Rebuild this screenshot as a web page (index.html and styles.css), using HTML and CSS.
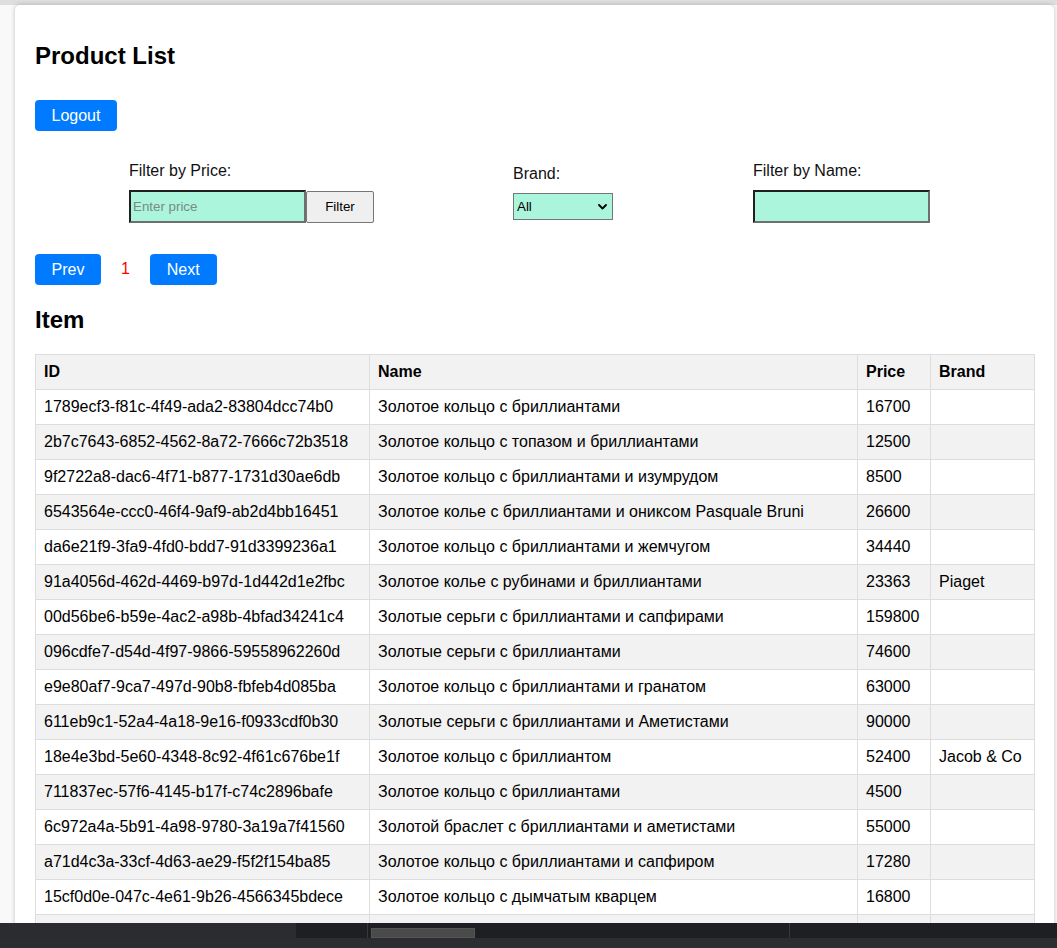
FILE: index.html
```html
<!DOCTYPE html>
<html lang="ru">
<head>
<meta charset="utf-8">
<title>Product List</title>
<link rel="stylesheet" href="styles.css">
</head>
<body>
<div class="topstrip"></div>
<div class="container">
  <h2 class="title">Product List</h2>
  <div class="logout-row"><button class="btn">Logout</button></div>

  <div class="filters">
    <div class="group group-price">
      <label class="lbl">Filter by Price:</label>
      <div class="inline">
        <input class="field" type="text" placeholder="Enter price">
        <button class="plain-btn">Filter</button>
      </div>
    </div>
    <div class="group group-brand">
      <label class="lbl">Brand:</label>
      <div class="select-wrap">
        <select class="select"><option>All</option></select>
        <svg class="chev" width="9" height="6" viewBox="0 0 9 6" aria-hidden="true">
          <path d="M1 1 L4.5 4.5 L8 1" fill="none" stroke="#000" stroke-width="1.8" stroke-linecap="round" stroke-linejoin="round"/>
        </svg>
      </div>
    </div>
    <div class="group group-name">
      <label class="lbl">Filter by Name:</label>
      <input class="field" type="text">
    </div>
  </div>

  <div class="pager">
    <button class="btn btn-page">Prev</button>
    <span class="page-num">1</span>
    <button class="btn btn-page">Next</button>
  </div>

  <h2 class="section-title">Item</h2>

  <table class="items">
    <colgroup>
      <col class="c-id"><col class="c-name"><col class="c-price"><col class="c-brand">
    </colgroup>
    <thead>
      <tr><th>ID</th><th>Name</th><th>Price</th><th>Brand</th></tr>
    </thead>
    <tbody>
      <tr><td>1789ecf3-f81c-4f49-ada2-83804dcc74b0</td><td>Золотое кольцо с бриллиантами</td><td>16700</td><td></td></tr>
      <tr><td>2b7c7643-6852-4562-8a72-7666c72b3518</td><td>Золотое кольцо с топазом и бриллиантами</td><td>12500</td><td></td></tr>
      <tr><td>9f2722a8-dac6-4f71-b877-1731d30ae6db</td><td>Золотое кольцо с бриллиантами и изумрудом</td><td>8500</td><td></td></tr>
      <tr><td>6543564e-ccc0-46f4-9af9-ab2d4bb16451</td><td>Золотое колье с бриллиантами и ониксом Pasquale Bruni</td><td>26600</td><td></td></tr>
      <tr><td>da6e21f9-3fa9-4fd0-bdd7-91d3399236a1</td><td>Золотое кольцо с бриллиантами и жемчугом</td><td>34440</td><td></td></tr>
      <tr><td>91a4056d-462d-4469-b97d-1d442d1e2fbc</td><td>Золотое колье с рубинами и бриллиантами</td><td>23363</td><td>Piaget</td></tr>
      <tr><td>00d56be6-b59e-4ac2-a98b-4bfad34241c4</td><td>Золотые серьги с бриллиантами и сапфирами</td><td>159800</td><td></td></tr>
      <tr><td>096cdfe7-d54d-4f97-9866-59558962260d</td><td>Золотые серьги с бриллиантами</td><td>74600</td><td></td></tr>
      <tr><td>e9e80af7-9ca7-497d-90b8-fbfeb4d085ba</td><td>Золотое кольцо с бриллиантами и гранатом</td><td>63000</td><td></td></tr>
      <tr><td>611eb9c1-52a4-4a18-9e16-f0933cdf0b30</td><td>Золотые серьги с бриллиантами и Аметистами</td><td>90000</td><td></td></tr>
      <tr><td>18e4e3bd-5e60-4348-8c92-4f61c676be1f</td><td>Золотое кольцо с бриллиантом</td><td>52400</td><td>Jacob &amp; Co</td></tr>
      <tr><td>711837ec-57f6-4145-b17f-c74c2896bafe</td><td>Золотое кольцо с бриллиантами</td><td>4500</td><td></td></tr>
      <tr><td>6c972a4a-5b91-4a98-9780-3a19a7f41560</td><td>Золотой браслет с бриллиантами и аметистами</td><td>55000</td><td></td></tr>
      <tr><td>a71d4c3a-33cf-4d63-ae29-f5f2f154ba85</td><td>Золотое кольцо с бриллиантами и сапфиром</td><td>17280</td><td></td></tr>
      <tr><td>15cf0d0e-047c-4e61-9b26-4566345bdece</td><td>Золотое кольцо с дымчатым кварцем</td><td>16800</td><td></td></tr>
      <tr><td>&nbsp;</td><td>&nbsp;</td><td>&nbsp;</td><td>&nbsp;</td></tr>
    </tbody>
  </table>
</div>

<div class="hscroll">
  <div class="hs-track">
    <div class="hs-left"></div>
    <div class="hs-gap1"></div>
    <div class="hs-line"></div>
    <div class="hs-thumb"></div>
    <div class="hs-gap2"></div>
    <div class="hs-line"></div>
  </div>
  <div class="hs-bottom"></div>
</div>
</body>
</html>
```

FILE: styles.css
```css
html, body {
  margin: 0;
  padding: 0;
  overflow: hidden;
}

body {
  background: #f9f9f9;
  font-family: "Liberation Sans", Arial, sans-serif;
  color: #000;
  font-size: 16px;
}

.topstrip {
  height: 5px;
  background: #dedede;
}

.container {
  margin: 0 3px 0 15px;
  background: #fff;
  border-radius: 5px;
  box-shadow: 0 0 5px rgba(0, 0, 0, 0.22);
  padding: 37px 20px 40px 20px;
}

.title {
  font-size: 24px;
  font-weight: bold;
  line-height: 27.6px;
  margin: 0 0 30px 0;
}

.btn {
  background: #007bff;
  color: #fff;
  border: 0;
  border-radius: 4px;
  font-family: "Liberation Sans", Arial, sans-serif;
  font-size: 16px;
  line-height: 19px;
  padding: 6px 16.5px;
  cursor: pointer;
}

.btn-page:last-child {
  padding: 6px 17px;
}

.logout-row {
  display: flex;
}

.filters {
  display: flex;
  align-items: center;
  gap: 139px;
  margin: 30px 0 0 94px;
}

.group {
  display: flex;
  flex-direction: column;
}

.group-name {
  margin-left: 1px;
}

.lbl {
  display: block;
  line-height: 18px;
  margin: 1px 0 10px 0;
  color: #111;
}

.inline {
  display: flex;
  align-items: flex-end;
}

.field {
  box-sizing: border-box;
  width: 177px;
  height: 33px;
  margin: 0;
  padding: 0 2px;
  background: #abf5dc;
  border-style: solid;
  border-width: 2px;
  border-color: #1f1f1f #6f6f6f #6f6f6f #1f1f1f;
  font-family: "Liberation Sans", Arial, sans-serif;
  font-size: 13.33px;
  outline: none;
}

.field::placeholder {
  color: #7a8a84;
}

.plain-btn {
  box-sizing: border-box;
  width: 68px;
  height: 32px;
  margin: 0;
  background: #efefef;
  border: 1px solid #767676;
  border-radius: 2px;
  font-family: "Liberation Sans", Arial, sans-serif;
  font-size: 13.33px;
  color: #000;
}

.select-wrap {
  position: relative;
  width: 100px;
  height: 27px;
}

.select {
  -webkit-appearance: none;
  appearance: none;
  box-sizing: border-box;
  width: 100px;
  height: 27px;
  margin: 0;
  background-color: #abf5dc;
  border: 1px solid #767676;
  border-radius: 0;
  font-family: "Liberation Sans", Arial, sans-serif;
  font-size: 13.33px;
  color: #000;
  padding: 0 3px;
}

.chev {
  position: absolute;
  right: 6px;
  top: 11px;
  pointer-events: none;
}

.pager {
  display: flex;
  align-items: center;
  margin-top: 31px;
}

.page-num {
  color: #ff0000;
  margin: 0 20px;
  line-height: 18px;
}

.section-title {
  font-size: 24px;
  font-weight: bold;
  line-height: 27.6px;
  margin: 21px 0 21px 0;
}

.items {
  width: 100%;
  border-collapse: collapse;
  table-layout: fixed;
}

.c-id { width: 334px; }
.c-name { width: 488px; }
.c-price { width: 73px; }
.c-brand { width: 104px; }

.items th,
.items td {
  border: 1px solid #dddddd;
  padding: 8px;
  line-height: 18px;
  text-align: left;
  white-space: nowrap;
  overflow: hidden;
}

.items th {
  background: #f2f2f2;
  font-weight: bold;
}

.items tbody tr:nth-child(even) td {
  background: #f2f2f2;
}

/* dark horizontal scrollbar strip at the bottom of the window */
.hscroll {
  position: fixed;
  left: 0;
  right: 0;
  bottom: 0;
  height: 25px;
  display: flex;
  flex-direction: column;
}

.hs-track {
  height: 15px;
  background: #1e1f22;
  display: flex;
}

.hs-left {
  width: 296px;
  background: #2b2c30;
}

.hs-gap1 {
  width: 71px;
}

.hs-line {
  width: 1px;
  background: #37383b;
}

.hs-thumb {
  box-sizing: border-box;
  width: 104px;
  height: 10px;
  margin: 5px 0 0 3px;
  background: #4a4a4b;
  border: 1px solid #555557;
}

.hs-gap2 {
  width: 314px;
}

.hs-bottom {
  flex: 1;
  background: #2b2d31;
}
```
